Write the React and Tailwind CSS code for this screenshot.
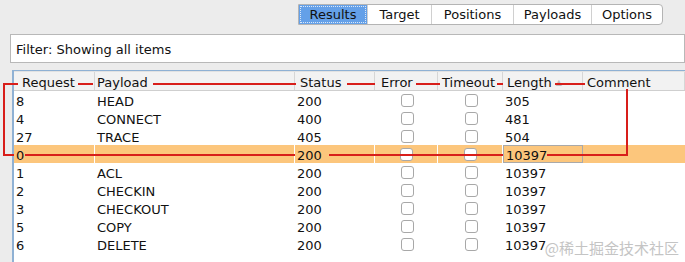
import React from 'react';

const cols = [
    { key: 'req', label: 'Request', w: 'w-[81px]', hp: 'pl-[8px]' },
    { key: 'payload', label: 'Payload', w: 'w-[200px]', hp: 'pl-[2px]' },
    { key: 'status', label: 'Status', w: 'w-[80px]', hp: 'pl-[5px]' },
    { key: 'error', label: 'Error', w: 'w-[63px]', hp: 'pl-[6px]' },
    { key: 'timeout', label: 'Timeout', w: 'w-[65px]', hp: 'pl-[4px]' },
    { key: 'length', label: 'Length', w: 'w-[80px]', hp: 'pl-[4px]' },
    { key: 'comment', label: 'Comment', w: 'w-[102px]', hp: 'pl-[4px]' },
];

const rows = [
    ['8', 'HEAD', '200', '305'],
    ['4', 'CONNECT', '400', '481'],
    ['27', 'TRACE', '405', '504'],
    ['0', '', '200', '10397', true],
    ['1', 'ACL', '200', '10397'],
    ['2', 'CHECKIN', '200', '10397'],
    ['3', 'CHECKOUT', '200', '10397'],
    ['5', 'COPY', '200', '10397'],
    ['6', 'DELETE', '200', '10397'],
];

const tabs = ['Results', 'Target', 'Positions', 'Payloads', 'Options'];
const tabW = ['w-[68px]', 'w-[64px]', 'w-[82px]', 'w-[78px]', 'w-[71px]'];

const Checkbox = () => (
    <div className="w-[13px] h-[13px] rounded-[3px] border border-[#a8a8a8] bg-white" />
);

export default function App() {
    return (
        <div className="relative w-[685px] h-[262px] overflow-hidden bg-[#ececec] text-[13px] text-[#111] font-['DejaVu_Sans','Noto_Sans_CJK_SC',sans-serif]">
            <div className="flex pl-[298px] pt-[4px]">
                <div className="flex h-[21px] border border-[#b4b4b4] rounded-r-[4px] bg-white overflow-hidden">
                    {tabs.map((t, i) => (
                        <div
                            key={t}
                            className={`${tabW[i]} flex items-center justify-center leading-none ${i === 0 ? 'bg-[#64a0e8] outline-1 outline-dotted outline-[#dbe8f8] -outline-offset-2' : 'border-l border-[#d0d0d0]'}`}
                        >
                            {t}
                        </div>
                    ))}
                </div>
            </div>

            <div className="ml-[10px] mt-[9px] h-[29px] border border-[#b8b8b8] bg-white flex items-center pl-[5px] pt-[2px]">
                Filter: Showing all items
            </div>

            <div className="ml-[12px] mt-[7px] border-l-2 border-t border-[#8fb1d4] bg-white h-[200px]">
                <div className="flex h-[20px] bg-[#f2f2f2] border-b border-[#cfcfcf] border-t border-t-[#e2e2e2]">
                    {cols.map((c) => (
                        <div key={c.key} className={`${c.w} ${c.hp} pt-[3px] shrink-0 flex items-center border-r border-[#d6d6d6] leading-none`}>
                            {c.label}
                            {c.key === 'length' && <span className="ml-[4px] text-[8px] text-[#bdbdbd]">▲</span>}
                        </div>
                    ))}
                </div>
                {rows.map((r) => (
                    <div key={r[0]} className={`flex h-[18px] items-center ${r[4] ? 'bg-[#fcc67c]' : ''}`}>
                        <div className={`w-[81px] pl-[2px] pt-[3px] shrink-0 h-full flex items-center ${r[4] ? 'border-r border-white' : ''}`}>{r[0]}</div>
                        <div className={`w-[200px] pl-[2px] pt-[3px] shrink-0 h-full flex items-center ${r[4] ? 'border-r border-white' : ''}`}>{r[1]}</div>
                        <div className={`w-[80px] pl-[2px] pt-[3px] shrink-0 h-full flex items-center ${r[4] ? 'border-r border-white' : ''}`}>{r[2]}</div>
                        <div className={`w-[63px] shrink-0 h-full flex items-center justify-center pl-[1px] ${r[4] ? 'border-r border-white' : ''}`}><Checkbox /></div>
                        <div className={`w-[65px] shrink-0 h-full flex items-center justify-center pl-[1px] ${r[4] ? 'border-r border-white' : ''}`}><Checkbox /></div>
                        <div className={`w-[80px] pl-[2px] pt-[3px] shrink-0 h-full flex items-center ${r[4] ? 'border border-[#a9a9a9]' : ''}`}>{r[3]}</div>
                        <div className="w-[102px] shrink-0 h-full" />
                    </div>
                ))}
            </div>

            <div className="absolute right-[6px] bottom-[3px] text-[15px] text-[#c4c4c4] font-['Noto_Sans_CJK_SC',sans-serif]">
                @稀土掘金技术社区
            </div>

            <svg className="absolute left-0 top-0 pointer-events-none" width="685" height="262">
                <g stroke="#d81e1a" strokeWidth="2" fill="none">
                    <path d="M18 84 H4 V155 H14" />
                    <path d="M25 155 H295" />
                    <path d="M329 155 H503" />
                    <path d="M547 155 H627 V89" />
                    <path d="M78 84 H93" />
                    <path d="M153 84 H296" />
                    <path d="M347 84 H375" />
                    <path d="M416 84 H440" />
                    <path d="M497 84 H503" />
                    <path d="M555 84 H585" />
                </g>
            </svg>
        </div>
    );
}
